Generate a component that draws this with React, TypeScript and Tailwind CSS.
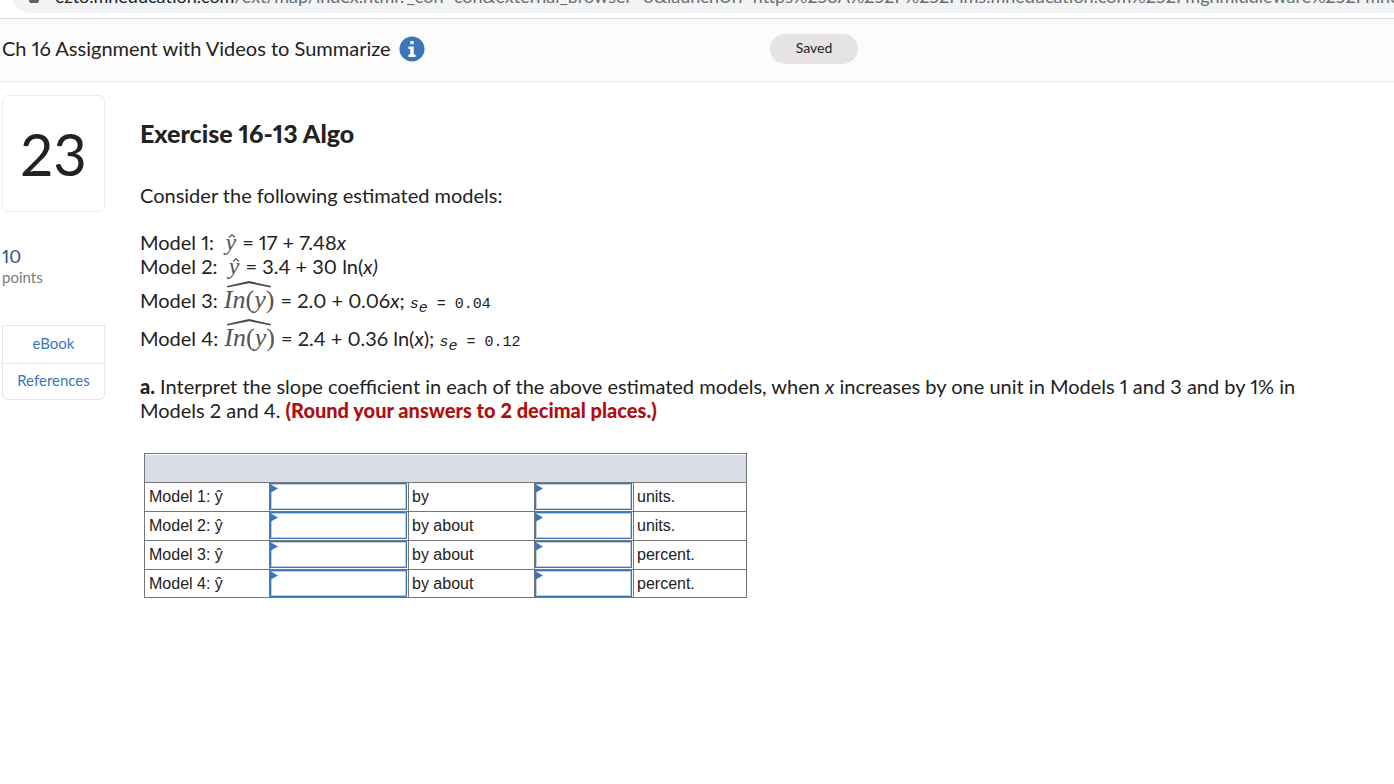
const rows = [
  { model: "Model 1: ŷ", by: "by", unit: "units." },
  { model: "Model 2: ŷ", by: "by about", unit: "units." },
  { model: "Model 3: ŷ", by: "by about", unit: "percent." },
  { model: "Model 4: ŷ", by: "by about", unit: "percent." },
];

function YHat() {
  return (
    <span className="relative inline-block px-px font-['Liberation_Serif',serif] text-[24px] leading-6 text-[#555] italic">
      y
      <svg className="absolute top-1 left-1 h-1 w-2" viewBox="0 0 8 4" fill="none" stroke="#555" strokeWidth="1.2">
        <path d="M1 3.5 4 .8 7 3.5" />
      </svg>
    </span>
  );
}

function LnYHat() {
  return (
    <span className="relative inline-block px-px font-['Liberation_Serif',serif] text-[26px] leading-6 text-[#555]">
      <i>In</i>(<i>y</i>)
      <svg className="absolute -top-2 left-1 h-2 w-[44px]" viewBox="0 0 44 8" fill="#4a4a4a">
        <path d="M0 6 22 1 44 6 43.600 7.400 22 3.200 .4 7.400Z" />
      </svg>
    </span>
  );
}

function StdError({ value }: { value: string }) {
  return (
    <span className="font-['Liberation_Mono',monospace] text-[15px]">
      <i>s</i>
      <i className="relative top-1">e</i> = {value}
    </span>
  );
}

function AnswerCell({ label }: { label: string }) {
  return (
    <td className="relative border border-[#767676] p-0 pr-px align-top">
      <input
        type="text"
        aria-label={label}
        className="block h-[27px] w-full border border-[#3b76ba] px-2 shadow-[inset_0_0_0_1px_#b9cfe8] outline-none"
      />
      <svg className="pointer-events-none absolute top-0 left-0 h-3 w-2" viewBox="0 0 8 12" fill="#3b76ba">
        <path d="M0 1 8 5.500 0 10Z" />
      </svg>
    </td>
  );
}

function AddressBar() {
  return (
    <div className="border-b border-[#dadce0] bg-white pb-[5px] pl-3">
      <div className="flex h-[13px] items-end overflow-hidden">
        <div className="flex h-[34px] flex-1 shrink-0 items-center rounded-l-full bg-[#f1f3f4] pl-[17px] text-[18px] whitespace-nowrap text-[#6a6d70]">
          <svg className="mr-4 h-4 w-[10px] shrink-0" viewBox="0 0 10 16" fill="#5f6368">
            <path d="M1 5h8a1 1 0 0 1 1 1v7a2 2 0 0 1-2 2H2a2 2 0 0 1-2-2V6a1 1 0 0 1 1-1Z" />
          </svg>
          <span className="text-[#202124]">ezto.mheducation.com</span>
          /ext/map/index.html?_con=con&amp;external_browser=0&amp;launchUrl=https%253A%252F%252Flms.mheducation.com%252Fmghmiddleware%252Fmheproducts
        </div>
      </div>
    </div>
  );
}

function Header() {
  return (
    <header className="flex h-[63px] items-center border-b border-[#eeeeee] bg-[#fcfcfc] pb-[2px] pl-[2px]">
      <div className="flex w-[768px] items-center">
        <h1 className="pb-[2px] text-[20px] leading-6">Ch 16 Assignment with Videos to Summarize</h1>
        <button aria-label="Assignment info" className="ml-2">
          <svg className="size-[26px]" viewBox="0 0 26 26">
            <circle cx="13" cy="13" r="12.500" fill="#3b76ba" />
            <path d="M11.300 5h3.400v3.300h-3.400zM9.500 10.500h5.200v8h1.800V21h-7v-2.500h1.800V13H9.500z" fill="#fff" />
          </svg>
        </button>
      </div>
      <span className="flex h-[30px] w-22 items-center justify-center rounded-full bg-[#e5e3e6] pb-[2px] text-sm">
        Saved
      </span>
    </header>
  );
}

function Sidebar() {
  return (
    <aside className="w-[103px] shrink-0">
      <div className="flex h-[117px] items-center justify-center rounded-md border border-[#ececec] text-[58px]">23</div>
      <div className="mt-8 text-lg leading-6 text-[#1d4f91]">10</div>
      <div className="text-[15px] leading-[18px] text-[#7a7a7a]">points</div>
      <nav className="mt-[39px] rounded-b-md border border-[#e6e6e6] text-center text-[15px] text-[#3b76ba]">
        <a href="#ebook" className="block border-b border-[#e6e6e6] pb-[2px] leading-[35px]">
          eBook
        </a>
        <a href="#references" className="block pb-[2px] leading-[33px]">
          References
        </a>
      </nav>
    </aside>
  );
}

function AnswerTable() {
  return (
    <table className="mt-[31px] ml-1 w-[603px] table-fixed border-collapse border border-[#767676] font-['Liberation_Sans',sans-serif] text-base leading-5">
      <colgroup>
        <col className="w-[125px]" />
        <col className="w-[139px]" />
        <col className="w-[126px]" />
        <col className="w-[99px]" />
        <col />
      </colgroup>
      <thead>
        <tr className="h-[29px]">
          <th colSpan={5} aria-label="Answers" className="border border-[#767676] bg-[#d8dce7] shadow-[inset_0_1px_0_white]"></th>
        </tr>
      </thead>
      <tbody>
        {rows.map((row) => (
          <tr key={row.model} className="h-[29px] last:h-7">
            <td className="border border-[#767676] px-1 py-0">{row.model}</td>
            <AnswerCell label={row.model + " direction"} />
            <td className="border border-[#767676] px-[3px] py-0">{row.by}</td>
            <AnswerCell label={row.model + " amount"} />
            <td className="border border-[#767676] px-[3px] py-0">{row.unit}</td>
          </tr>
        ))}
      </tbody>
    </table>
  );
}

export default function App() {
  return (
    <div className="min-h-screen bg-white font-['Lato',sans-serif] text-[#222] proportional-nums">
      <AddressBar />
      <Header />
      <div className="flex gap-[35px] pt-[13px] pr-[90px] pl-[2px]">
        <Sidebar />
        <main className="min-w-0 flex-1 pt-6 text-[20px] leading-6">
          <h2 className="text-[25px] leading-7 font-black">Exercise 16-13 Algo</h2>
          <p className="mt-9">Consider the following estimated models:</p>
          <div className="mt-[23px]">
            <p className="h-6">
              Model 1:&nbsp; <YHat /> = 17 + 7.48<i>x</i>
            </p>
            <p className="h-6">
              Model 2:&nbsp; <YHat /> = 3.4 + 30 ln(<i>x)</i>
            </p>
            <p className="mt-[10px] h-7">
              Model 3: <LnYHat /> = 2.0 + 0.06<i>x</i>; <StdError value="0.04" />
            </p>
            <p className="mt-[10px] h-7">
              Model 4: <LnYHat /> = 2.4 + 0.36 ln(<i>x</i>); <StdError value="0.12" />
            </p>
          </div>
          <p className="mt-5">
            <b className="font-black">a.</b> Interpret the slope coefficient in each of the above estimated models, when{" "}
            <i>x</i> increases by one unit in Models 1 and 3 and by 1% in Models 2 and 4.{" "}
            <b className="font-black text-[#b10e0e]">(Round your answers to 2 decimal places.)</b>
          </p>
          <AnswerTable />
        </main>
      </div>
    </div>
  );
}
